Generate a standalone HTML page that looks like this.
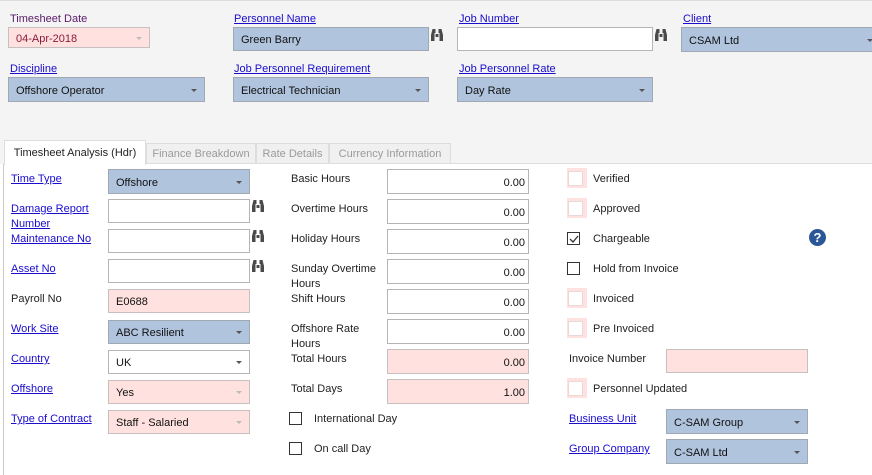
<!DOCTYPE html>
<html><head><meta charset="utf-8"><style>
*{box-sizing:border-box;margin:0;padding:0}
body{width:872px;height:475px;position:relative;overflow:hidden;background:#fff;font-family:"Liberation Sans",sans-serif;font-size:11px;color:#222}
.top{position:absolute;left:0;top:0;width:872px;height:164px;background:#f4f4f4;border-top:1px solid #ddd}
.a{position:absolute}
.l{position:absolute;color:#222;line-height:15px;margin-top:1px}
.k{position:absolute;color:#1a0dcc;text-decoration:underline;line-height:15px;margin-top:1px}
.f{position:absolute;border:1px solid #b5b5b5;background:#fff;padding-left:7px;padding-top:2px;display:flex;align-items:center;color:#111}
.b{background:#b0c4de;border-color:#a0a8b4}
.p{background:#ffe2e0;border-color:#c8c0c0}
.n{justify-content:flex-end;padding-right:3px}
.dd::after{content:"";position:absolute;right:7px;top:50%;margin-top:-1px;border-left:3px solid transparent;border-right:3px solid transparent;border-top:3px solid #555}
.dd.g::after{border-top-color:#bbb}
.bin{position:absolute;width:12px;height:14px}
.cb{position:absolute;width:13px;height:13px;border:1px solid #333;background:#fff}
.pc{position:absolute;width:20px;height:20px;background:#ffe2e0}
.pc::after{content:"";position:absolute;left:1px;top:3px;width:13px;height:13px;background:#fff;border:1px solid #e8d8d8}
.tab{position:absolute;top:143px;height:21px;border:1px solid #ddd;background:#f0f0f0;color:#9a9a9a;line-height:21px;text-align:center}
</style></head><body>
<div class="top"></div>
<div class="a" style="left:3px;top:164px;width:1px;height:311px;background:#ccc"></div>
<div class="a" style="left:146px;top:163px;width:726px;height:1px;background:#ddd"></div>

<div class="l" style="left:10px;top:11px;color:#5a1a6a">Timesheet Date</div>
<div class="f p dd g" style="left:8px;top:27px;width:142px;height:21px;color:#8a1a3a">04-Apr-2018</div>
<div class="k" style="left:234px;top:11px">Personnel Name</div>
<div class="f b" style="left:233px;top:27px;width:196px;height:24px">Green Barry</div>
<svg class="bin" style="left:431px;top:28px" viewBox="0 0 12 14"><path d="M1.5 1h3v4h-1v8h-3.5v-6zM7.5 1h3l1.5 6v6h-3.5v-8h-1zM4.5 6h3v3h-3z" fill="#4a4a4a"/></svg>
<div class="k" style="left:459px;top:11px">Job Number</div>
<div class="f" style="left:457px;top:27px;width:196px;height:24px"></div>
<svg class="bin" style="left:655px;top:28px" viewBox="0 0 12 14"><path d="M1.5 1h3v4h-1v8h-3.5v-6zM7.5 1h3l1.5 6v6h-3.5v-8h-1zM4.5 6h3v3h-3z" fill="#4a4a4a"/></svg>
<div class="k" style="left:683px;top:11px">Client</div>
<div class="f b dd" style="left:681px;top:27px;width:200px;height:25px">CSAM Ltd</div>

<div class="k" style="left:10px;top:61px">Discipline</div>
<div class="f b dd" style="left:8px;top:77px;width:197px;height:25px">Offshore Operator</div>
<div class="k" style="left:234px;top:61px">Job Personnel Requirement</div>
<div class="f b dd" style="left:233px;top:77px;width:196px;height:25px">Electrical Technician</div>
<div class="k" style="left:459px;top:61px">Job Personnel Rate</div>
<div class="f b dd" style="left:457px;top:77px;width:196px;height:25px">Day Rate</div>

<div class="a" style="left:4px;top:140px;width:142px;height:25px;background:#fff;border:1px solid #ddd;border-bottom:none;line-height:25px;text-align:center;color:#222">Timesheet Analysis (Hdr)</div>
<div class="tab" style="left:146px;width:110px">Finance Breakdown</div>
<div class="tab" style="left:256px;width:73px">Rate Details</div>
<div class="tab" style="left:329px;width:122px">Currency Information</div>

<div class="k" style="left:11px;top:171px">Time Type</div>
<div class="f b dd" style="left:108px;top:169px;width:142px;height:25px">Offshore</div>
<div class="k" style="left:11px;top:201px">Damage Report<br>Number</div>
<div class="f" style="left:108px;top:199px;width:142px;height:24px"></div>
<div class="k" style="left:11px;top:231px">Maintenance No</div>
<div class="f" style="left:108px;top:229px;width:142px;height:24px"></div>
<div class="k" style="left:11px;top:261px">Asset No</div>
<div class="f" style="left:108px;top:259px;width:142px;height:24px"></div>
<svg class="bin" style="left:252px;top:199px" viewBox="0 0 12 14"><path d="M1.5 1h3v4h-1v8h-3.5v-6zM7.5 1h3l1.5 6v6h-3.5v-8h-1zM4.5 6h3v3h-3z" fill="#4a4a4a"/></svg>
<svg class="bin" style="left:252px;top:229px" viewBox="0 0 12 14"><path d="M1.5 1h3v4h-1v8h-3.5v-6zM7.5 1h3l1.5 6v6h-3.5v-8h-1zM4.5 6h3v3h-3z" fill="#4a4a4a"/></svg>
<svg class="bin" style="left:252px;top:259px" viewBox="0 0 12 14"><path d="M1.5 1h3v4h-1v8h-3.5v-6zM7.5 1h3l1.5 6v6h-3.5v-8h-1zM4.5 6h3v3h-3z" fill="#4a4a4a"/></svg>
<div class="l" style="left:11px;top:291px">Payroll No</div>
<div class="f p" style="left:108px;top:289px;width:142px;height:24px">E0688</div>
<div class="k" style="left:11px;top:321px">Work Site</div>
<div class="f b dd" style="left:108px;top:320px;width:142px;height:24px">ABC Resilient</div>
<div class="k" style="left:11px;top:351px">Country</div>
<div class="f dd" style="left:108px;top:350px;width:142px;height:24px">UK</div>
<div class="k" style="left:11px;top:381px">Offshore</div>
<div class="f p dd g" style="left:108px;top:380px;width:142px;height:24px">Yes</div>
<div class="k" style="left:11px;top:411px">Type of Contract</div>
<div class="f p dd g" style="left:108px;top:410px;width:142px;height:24px">Staff - Salaried</div>

<div class="l" style="left:291px;top:171px">Basic Hours</div>
<div class="f n" style="left:387px;top:169px;width:142px;height:25px">0.00</div>
<div class="l" style="left:291px;top:201px">Overtime Hours</div>
<div class="f n" style="left:387px;top:199px;width:142px;height:25px">0.00</div>
<div class="l" style="left:291px;top:231px">Holiday Hours</div>
<div class="f n" style="left:387px;top:229px;width:142px;height:25px">0.00</div>
<div class="l" style="left:291px;top:261px">Sunday Overtime<br>Hours</div>
<div class="f n" style="left:387px;top:259px;width:142px;height:25px">0.00</div>
<div class="l" style="left:291px;top:291px">Shift Hours</div>
<div class="f n" style="left:387px;top:289px;width:142px;height:25px">0.00</div>
<div class="l" style="left:291px;top:321px">Offshore Rate<br>Hours</div>
<div class="f n" style="left:387px;top:319px;width:142px;height:25px">0.00</div>
<div class="l" style="left:291px;top:351px">Total Hours</div>
<div class="f n p" style="left:387px;top:349px;width:142px;height:25px">0.00</div>
<div class="l" style="left:291px;top:381px">Total Days</div>
<div class="f n p" style="left:387px;top:379px;width:142px;height:25px">1.00</div>
<div class="cb" style="left:289px;top:412px"></div>
<div class="l" style="left:314px;top:411px">International Day</div>
<div class="cb" style="left:289px;top:442px"></div>
<div class="l" style="left:314px;top:441px">On call Day</div>

<div class="pc" style="left:567px;top:168px"></div><div class="l" style="left:593px;top:171px">Verified</div>
<div class="pc" style="left:567px;top:198px"></div><div class="l" style="left:593px;top:201px">Approved</div>
<div class="cb" style="left:567px;top:232px"></div>
<svg class="a" style="left:568px;top:233px" width="12" height="12" viewBox="0 0 12 12"><path d="M2 6l3 3 5-6" stroke="#333" stroke-width="1.3" fill="none"/></svg>
<div class="l" style="left:593px;top:231px">Chargeable</div>
<svg class="a" style="left:809px;top:229px" width="17" height="17" viewBox="0 0 17 17"><circle cx="8.5" cy="8.5" r="8.5" fill="#2b5797"/><text x="8.5" y="13" text-anchor="middle" font-family="Liberation Sans" font-weight="bold" font-size="13" fill="#fff">?</text></svg>
<div class="cb" style="left:567px;top:262px"></div><div class="l" style="left:593px;top:261px">Hold from Invoice</div>
<div class="pc" style="left:567px;top:288px"></div><div class="l" style="left:593px;top:291px">Invoiced</div>
<div class="pc" style="left:567px;top:318px"></div><div class="l" style="left:593px;top:321px">Pre Invoiced</div>
<div class="l" style="left:569px;top:351px">Invoice Number</div>
<div class="f p" style="left:666px;top:349px;width:142px;height:24px"></div>
<div class="pc" style="left:567px;top:378px"></div><div class="l" style="left:593px;top:381px">Personnel Updated</div>
<div class="k" style="left:569px;top:411px">Business Unit</div>
<div class="f b dd" style="left:666px;top:409px;width:142px;height:25px">C-SAM Group</div>
<div class="k" style="left:569px;top:441px">Group Company</div>
<div class="f b dd" style="left:666px;top:439px;width:142px;height:25px">C-SAM Ltd</div>
</body></html>
